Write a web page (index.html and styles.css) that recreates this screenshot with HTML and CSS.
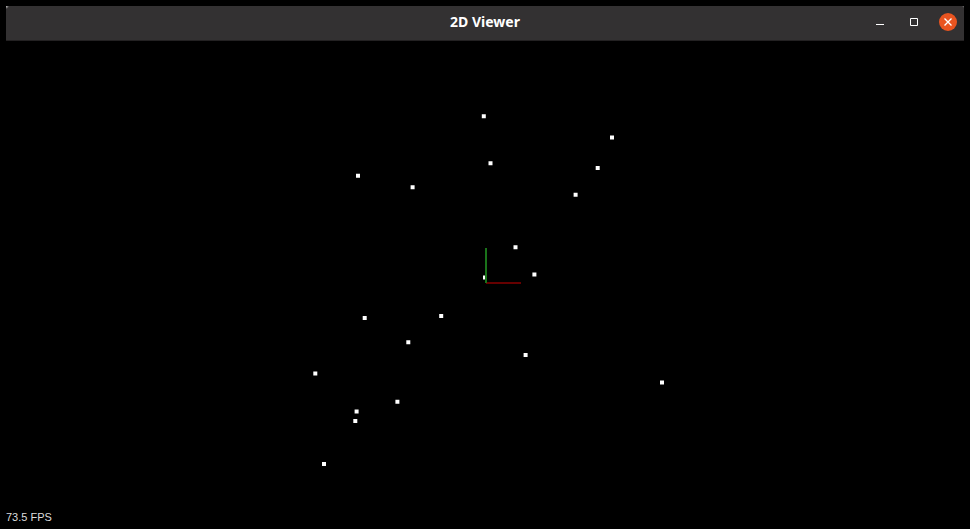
FILE: index.html
```html
<!DOCTYPE html>
<html lang="en">
<head>
<meta charset="utf-8">
<title>2D Viewer</title>
<link rel="stylesheet" href="styles.css">
</head>
<body>
<main class="window">
  <header class="titlebar">
    <h1 class="title">2D Viewer</h1>
    <div class="controls">
      <button class="control" type="button" aria-label="Minimize">
        <svg viewBox="0 0 18 18" aria-hidden="true"><path d="M5 11.5h8"/></svg>
      </button>
      <button class="control" type="button" aria-label="Maximize">
        <svg viewBox="0 0 18 18" aria-hidden="true"><path d="M5.5 5.5h7v7h-7z"/></svg>
      </button>
      <button class="control close" type="button" aria-label="Close">
        <svg viewBox="0 0 18 18" aria-hidden="true"><path d="M5.5 5.5l7 7M12.5 5.5l-7 7"/></svg>
      </button>
    </div>
  </header>
  <section class="viewport">
    <svg class="scene" viewBox="-480 -242 958 482" role="img" aria-label="Point cloud">
      <path class="points" d="M-2.2 -166.8h0M126 -145.6h0M4.5 -119.8h0M111.7 -115h0M-128 -107.3h0M-73.4 -95.7h0M89.6 -88.2h0M29.5 -35.7h0M48.4 -8.6h0M-1 -5.5h0M-44.8 33h0M-121.3 35h0M-77.7 59.3h0M39.6 72h0M-170.7 90.6h0M176 99.5h0M-88.6 118.7h0M-129.4 128.5h0M-130.7 138h0M-162 181h0"/>
      <path class="axis-x" d="M0 0h35"/>
      <path class="axis-y" d="M0 0v-35"/>
    </svg>
    <p class="fps">73.5 FPS</p>
  </section>
</main>
</body>
</html>
```
FILE: styles.css
```css
* {
  box-sizing: border-box;
}

body {
  margin: 0;
  background: #000;
  color: #fff;
}

.window {
  display: flex;
  flex-direction: column;
  height: 100vh;
  padding: 6px;
}

.titlebar {
  display: grid;
  grid-template-columns: 1fr auto 1fr;
  align-items: center;
  padding: 7px 7px 9px;
  background:
    radial-gradient(circle at top left, #ccc, transparent 3px),
    radial-gradient(circle at top right, #777, transparent 2px),
    #333132;
  border-bottom: 1px solid #232122;
}

.title {
  grid-column: 2;
  margin: 0;
  font: bold 14px/18px "Noto Sans", sans-serif;
}

.controls {
  display: flex;
  justify-content: flex-end;
  gap: 16px;
}

.control {
  width: 18px;
  height: 18px;
  padding: 0;
  border: 0;
  border-radius: 50%;
  background: none;
}

.control svg {
  display: block;
  fill: none;
  stroke: #fff;
}

.close {
  background: #e95420;
}

.close path {
  stroke-width: 1.4;
}

.viewport {
  position: relative;
  flex: 1;
  min-height: 0;
}

.scene {
  display: block;
  width: 100%;
  height: 100%;
}

.points {
  fill: none;
  stroke: #fff;
  stroke-width: 4;
  stroke-linecap: square;
}

.axis-x,
.axis-y {
  fill: none;
  stroke-width: 2;
}

.axis-x {
  stroke: #660000;
}

.axis-y {
  stroke: #1a731a;
}

.fps {
  position: absolute;
  left: 0;
  bottom: 0;
  margin: 0;
  color: #ddd;
  font: 11px/12px "Liberation Sans", sans-serif;
}
```
